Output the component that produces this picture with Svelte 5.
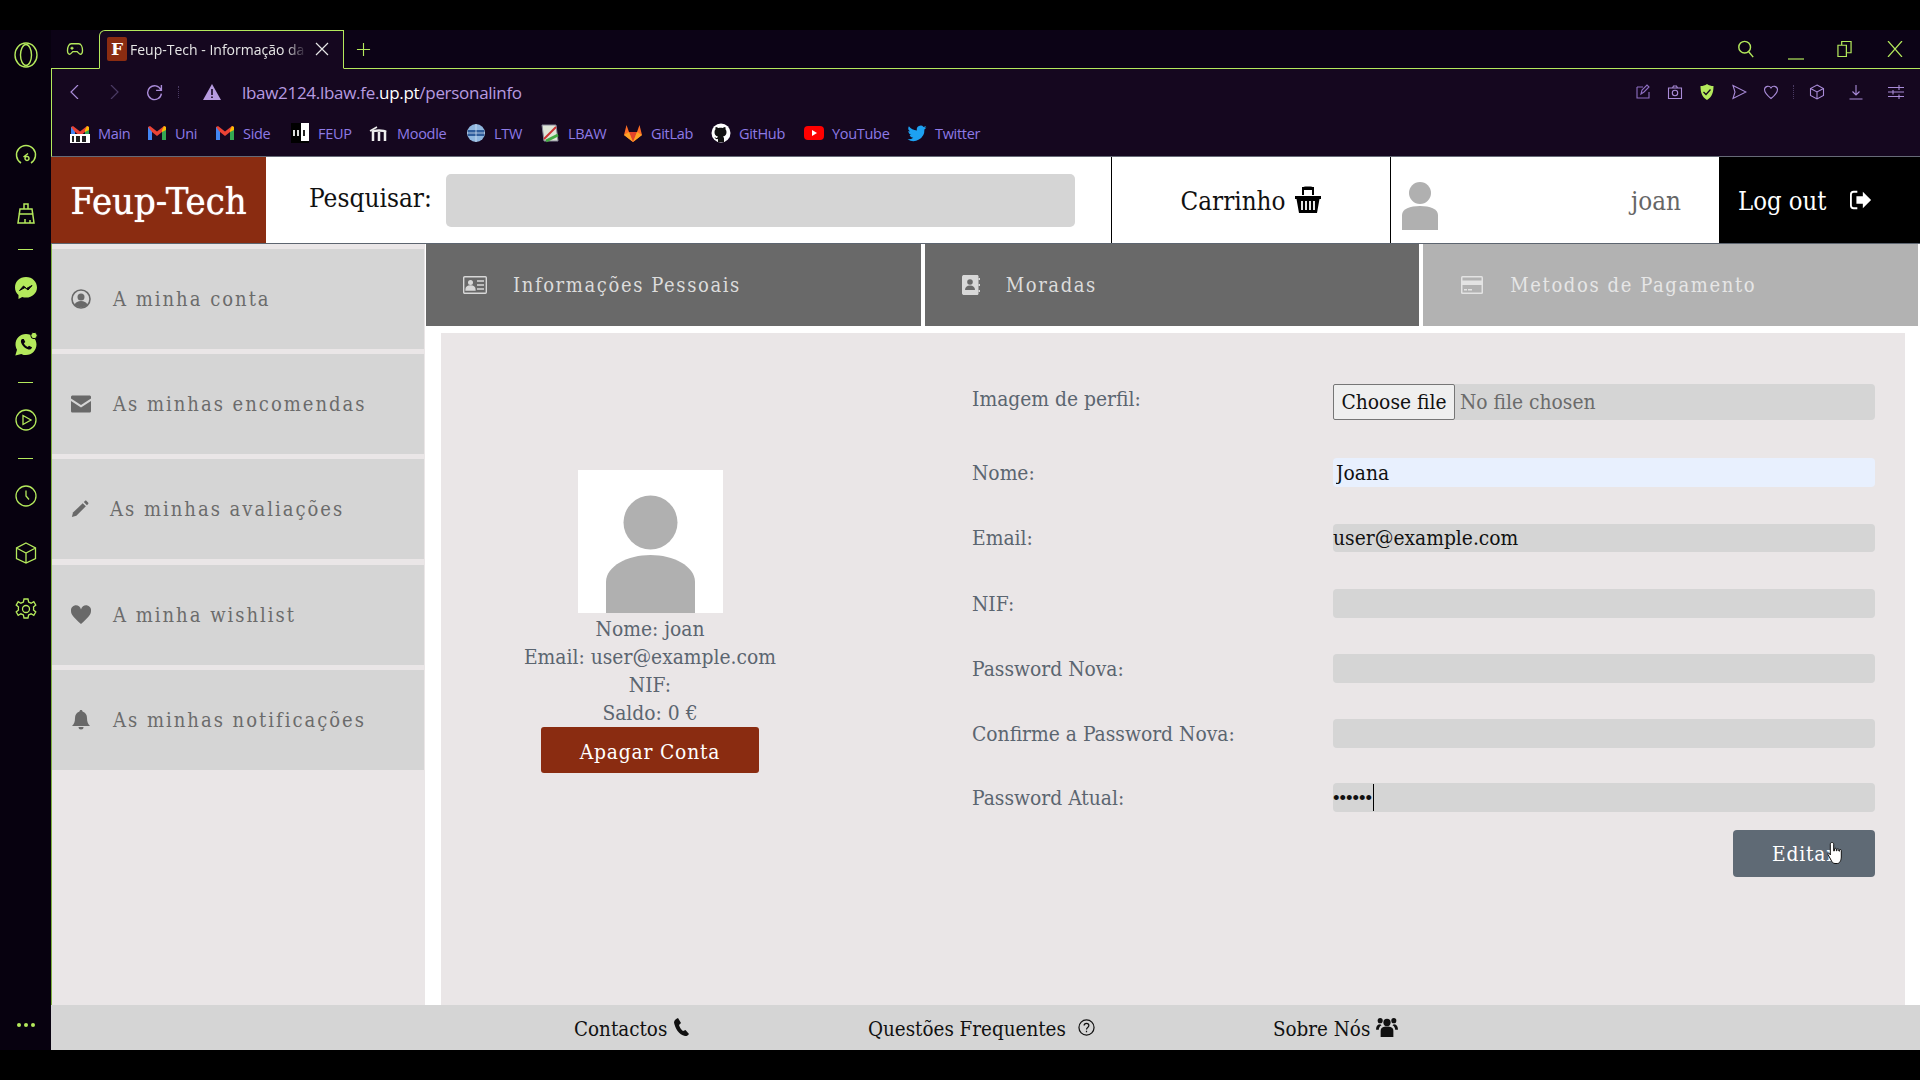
<script>
  // left rail of the browser: centre-to-centre spacing comes from the data
  const rail = [
    { id: 'speed', top: 74 }, { id: 'bag', top: 34 }, { id: 'dash', top: 12 },
    { id: 'msg', top: 15 }, { id: 'wa', top: 32 }, { id: 'dash', top: 14 },
    { id: 'play', top: 14 }, { id: 'dash', top: 14 }, { id: 'clock', top: 14 },
    { id: 'cube', top: 33 }, { id: 'gear', top: 32 }
  ];
  const bookmarks = [
    { id: 'gm100', label: 'Main', w: 77 }, { id: 'gm', label: 'Uni', w: 68 }, { id: 'gm', label: 'Side', w: 75 },
    { id: 'up', label: 'FEUP', w: 79 }, { id: 'moodle', label: 'Moodle', w: 97 }, { id: 'ltw', label: 'LTW', w: 74 },
    { id: 'lbaw', label: 'LBAW', w: 83 }, { id: 'gitlab', label: 'GitLab', w: 88 }, { id: 'github', label: 'GitHub', w: 93 },
    { id: 'yt', label: 'YouTube', w: 103 }, { id: 'tw', label: 'Twitter', w: 80 }
  ];
  const menu = [
    { id: 'user', label: 'A minha conta' }, { id: 'mail', label: 'As minhas encomendas' },
    { id: 'pen', label: 'As minhas avaliações' }, { id: 'heart', label: 'A minha wishlist' },
    { id: 'bell', label: 'As minhas notificações' }
  ];
</script>

{#snippet avatar(cls)}
  <svg class={cls} viewBox="0 0 145 143"><rect width="145" height="143" fill="#fff"/><ellipse cx="72.500" cy="52.500" rx="27" ry="27" fill="#b0b0b0"/><path d="M28 143V112C28 96 50 85 72.500 85S117 96 117 112V143Z" fill="#b0b0b0"/></svg>
{/snippet}

<div class="screen">
  <div class="browser">
    <aside class="rail">
      <svg class="opera" viewBox="0 0 24 28" fill="none" stroke="#b4e95c" stroke-width="1.400"><ellipse cx="12" cy="14" rx="11" ry="12"/><ellipse cx="12" cy="14" rx="5.500" ry="10.500"/></svg>
      {#each rail as r}
        <div class="rail-item" style="margin-top:{r.top}px">
          {#if r.id === 'dash'}<span class="dash"></span>
          {:else if r.id === 'speed'}<svg viewBox="0 0 24 24" fill="none" stroke="#b4e95c" stroke-width="1.500"><path d="M7 20A9.500 9.500 0 1 1 17 20"/><path d="M9.500 14L14 10.500M11 15.500a2 2 0 1 0 0-.1"/></svg>
          {:else if r.id === 'bag'}<svg viewBox="0 0 24 24" fill="none" stroke="#b4e95c" stroke-width="1.500"><path d="M10 3h4v5h-4zM6 8h12l2 14H4zM4.500 13h15M11 22v-4M16 22v-3"/></svg>
          {:else if r.id === 'msg'}<svg viewBox="0 0 24 24"><path d="M12 1C5.500 1 1 5.500 1 11.500c0 3.200 1.300 5.800 3.500 7.600V23l3.700-2c1.200.400 2.500.600 3.800.600 6.500 0 11-4.600 11-10.100S18.500 1 12 1Z" fill="#b4e95c"/><path d="M5.500 14.500l4-4.500 3 2.500 5.500-3-4 4.500-3-2.500Z" fill="#07010f" stroke="#07010f"/></svg>
          {:else if r.id === 'wa'}<svg viewBox="0 0 24 24"><path d="M12 2C6 2 1.500 6.500 1.500 12.300c0 2 .500 3.800 1.500 5.400L1.300 23.500l6-1.600c1.500.800 3.100 1.200 4.700 1.200 6 0 10.500-4.700 10.500-10.500S18 2 12 2Z" fill="#b4e95c"/><path d="M8 7c-1.500 1-1.500 3 0 5.500s4 4.500 6.500 5c2 .300 3.500-1 3.500-2.300l-3-1.500-1.300 1.300c-1.800-.800-3-2.100-3.800-3.800L11.300 10 9.800 7Z" fill="#07010f"/><circle cx="20" cy="3.500" r="3.200" fill="#b4e95c" stroke="#07010f"/></svg>
          {:else if r.id === 'play'}<svg viewBox="0 0 24 24" fill="none" stroke="#b4e95c" stroke-width="1.300"><circle cx="12" cy="12" r="10"/><path d="M9 7.500L17 12l-8 4.500Z"/></svg>
          {:else if r.id === 'clock'}<svg viewBox="0 0 24 24" fill="none" stroke="#b4e95c" stroke-width="1.300"><circle cx="12" cy="12" r="10"/><path d="M12 6.500V12l3 3.500"/></svg>
          {:else if r.id === 'cube'}<svg viewBox="0 0 24 24" fill="none" stroke="#b4e95c" stroke-width="1.300"><path d="M12 2l9.500 5v10.500L12 22l-9.500-4.500V7ZM2.500 7l9.500 5 9.500-5M12 12v10"/></svg>
          {:else if r.id === 'gear'}<svg viewBox="0 0 24 24" fill="none" stroke="#b4e95c" stroke-width="1.300"><circle cx="12" cy="12" r="3.500"/><path d="M10 2h4l.600 3 2.500 1.200 2.700-1.500 2 3.400-2.300 2c.200.900.200 1.800 0 2.800l2.300 2-2 3.400-2.700-1.500-2.500 1.200-.600 3h-4l-.600-3-2.500-1.200-2.700 1.500-2-3.400 2.300-2c-.200-1-.200-1.900 0-2.800l-2.300-2 2-3.400 2.700 1.500L9.400 5Z"/></svg>
          {/if}
        </div>
      {/each}
      <div class="dots"><i></i><i></i><i></i></div>
    </aside>

    <div class="window">
      <div class="tabbar">
        <svg class="game" viewBox="0 0 24 24" fill="none" stroke="#b4e95c" stroke-width="1.800"><path d="M7 5h10c3 0 5 4 5 9 0 3-1 5-3 5-1.500 0-2.500-2-4-3.500H9C7.500 17 6.500 19 5 19c-2 0-3-2-3-5 0-5 2-9 5-9Z"/><path d="M6 11h4M8 9v4M15.500 10h.1M17.500 12.500h.1"/></svg>
        <div class="tab">
          <span class="favicon">F</span>
          <span class="tab-title">Feup-Tech - Informação da</span>
          <svg class="tab-x" viewBox="0 0 14 14" stroke="#e6e6e6" stroke-width="1.200"><path d="M1 1l12 12M13 1L1 13"/></svg>
        </div>
        <svg class="plus" viewBox="0 0 16 16" stroke="#b4e95c" stroke-width="1.200"><path d="M8 1v14M1 8h14"/></svg>
        <div class="win-btns">
          <svg class="w-search" viewBox="0 0 20 20" fill="none" stroke="#b4e95c" stroke-width="1.600"><circle cx="8.500" cy="8" r="6.500"/><path d="M13 13l5 6"/></svg>
          <svg class="w-min" viewBox="0 0 16 16" stroke="#b4e95c" stroke-width="1.200"><path d="M0 15h16"/></svg>
          <svg class="w-max" viewBox="0 0 16 18" fill="none" stroke="#b4e95c" stroke-width="1.300"><path d="M1 5h9v12H1zM5 5V1h10v12h-5"/></svg>
          <svg class="w-close" viewBox="0 0 16 16" stroke="#b4e95c" stroke-width="1.200"><path d="M1 0l14 16M15 0L1 16"/></svg>
        </div>
      </div>

      <div class="urlbar">
        <svg class="nav" viewBox="0 0 14 14" fill="none" stroke="#a98bd8" stroke-width="1.200"><path d="M10 0L3 7l7 7"/></svg>
        <svg class="nav dim" viewBox="0 0 14 14" fill="none" stroke="#4a3a63" stroke-width="1.200"><path d="M4 0l7 7-7 7"/></svg>
        <svg class="nav reload" viewBox="0 0 16 16" fill="none" stroke="#a98bd8" stroke-width="1.300"><path d="M14 5.500A6.500 6.500 0 1 0 14.500 9M14.500 1v5h-5"/></svg>
        <span class="url-sep"></span>
        <svg class="warn" viewBox="0 0 18 16"><path d="M9 0l9 16H0Z" fill="#b79be0"/><path d="M9 5v6M9 12.500v1.500" stroke="#15071f" stroke-width="1.600"/></svg>
        <span class="url">lbaw2124.lbaw.fe.<b>up.pt</b>/personalinfo</span>
        <div class="tools">
          <svg viewBox="0 0 16 16" fill="none" stroke="#8f6fc4" stroke-width="1.100"><path d="M2 3h6M2 3v11h12V8M6 10l1-4 5-5 2 2-5 5Z"/></svg>
          <svg viewBox="0 0 16 16" fill="none" stroke="#a98bd8" stroke-width="1.100"><path d="M1.500 4h13v10.500h-13zM5.500 4l1-2h3l1 2"/><circle cx="8" cy="9" r="2.700"/></svg>
          <svg viewBox="0 0 16 16"><path d="M8 0c2 1.500 4 2 6.500 2 0 6.500-1.500 11-6.500 14C3 13 1.500 8.500 1.500 2 4 2 6 1.500 8 0Z" fill="#b4e95c"/><path d="M4.500 8l2.500 2.500 4.500-5" fill="none" stroke="#15071f" stroke-width="1.300"/></svg>
          <svg viewBox="0 0 16 16" fill="none" stroke="#a98bd8" stroke-width="1.100"><path d="M2 1.500L15 8 2 14.500 4 8Z"/></svg>
          <svg viewBox="0 0 16 16" fill="none" stroke="#a98bd8" stroke-width="1.100"><path d="M8 14.500C3 10.500 1.500 8 1.500 5.500A3.500 3.500 0 0 1 8 4a3.500 3.500 0 0 1 6.500 1.500C14.500 8 13 10.500 8 14.500Z"/></svg>
          <span class="tools-sep"></span>
          <svg viewBox="0 0 16 16" fill="none" stroke="#a98bd8" stroke-width="1.100"><path d="M8 1l6.500 3.500v7L8 15l-6.500-3.500v-7ZM1.500 4.500L8 8l6.500-3.500M8 8v7"/></svg>
          <svg viewBox="0 0 16 16" fill="none" stroke="#a98bd8" stroke-width="1.100"><path d="M8 1v10M4.500 7.500L8 11l3.500-3.500M1.500 15h13"/></svg>
          <svg viewBox="0 0 16 16" fill="none" stroke="#a98bd8" stroke-width="1.100"><path d="M0 3.500h16M0 8h16M0 12.500h16M11 1v5M5 6v4.500M11 10.500V15"/></svg>
        </div>
      </div>

      <div class="bookmarks">
        {#each bookmarks as b}
          <div class="bm" style="width:{b.w}px">
            {#if b.id === 'gm' || b.id === 'gm100'}
              <svg viewBox="0 0 20 20"><path d="M1 4v13h4V9l5 4 5-4v8h4V4l-2-1-7 5.500L3 3Z" fill="#ea4335"/><path d="M1 4v13h4V9Z" fill="#4285f4"/><path d="M19 4v13h-4V9Z" fill="#34a853"/><path d="M15 7l2-4 2 1v3l-4 2Z" fill="#fbbc04"/>{#if b.id === 'gm100'}<rect y="11" width="20" height="9" fill="#fff"/><rect x="2" y="13" width="2" height="6" fill="#222"/><rect x="6" y="13" width="4" height="6" fill="#222"/><rect x="12" y="13" width="4" height="6" fill="#222"/>{/if}</svg>
            {:else if b.id === 'up'}
              <svg viewBox="0 0 20 20"><rect x="1" width="18" height="20" fill="#000"/><rect x="11" width="8" height="18" fill="#fff"/><rect x="3" y="7" width="2" height="6" fill="#ddd"/><rect x="7" y="7" width="2" height="6" fill="#ddd"/><rect x="13" y="7" width="2" height="6" fill="#222"/></svg>
            {:else if b.id === 'moodle'}
              <svg viewBox="0 0 20 20" fill="none" stroke="#eee" stroke-width="2.500"><path d="M4 18V9M10 18V9M16 18V9M3 9c2-2 12-2 14 0"/><path d="M1 8L8 4" stroke-width="1.500"/></svg>
            {:else if b.id === 'ltw'}
              <svg viewBox="0 0 20 20"><circle cx="10" cy="10" r="9" fill="#8fb6de"/><rect x="2" y="7" width="16" height="6" fill="#2f5d9b"/><path d="M10 1v18M1 10h18" stroke="#cfe0f2" stroke-width=".8"/></svg>
            {:else if b.id === 'lbaw'}
              <svg viewBox="0 0 20 20"><path d="M2 2h14l2 16H4Z" fill="#dfe6d8" stroke="#889"/><path d="M4 16L16 4" stroke="#c33" stroke-width="2"/><path d="M6 18l12-6" stroke="#4a4" stroke-width="3"/></svg>
            {:else if b.id === 'gitlab'}
              <svg viewBox="0 0 20 20"><path d="M10 19L1 12 3.500 2 6 9h8l2.500-7L19 12Z" fill="#fc6d26"/><path d="M10 19L6 9h8Z" fill="#e24329"/><path d="M1 12l5-3 4 10ZM19 12l-5-3-4 10Z" fill="#fca326"/></svg>
            {:else if b.id === 'github'}
              <svg viewBox="0 0 20 20"><circle cx="10" cy="10" r="9.500" fill="#fff"/><path d="M7 19v-3c-2 .500-3-.500-3.500-2 1 .500 1.500 1 2.500 1 .300-.700.700-1 1-1.500-2.500-.500-3.500-2-3.500-4.500 0-1 .300-2 1-2.700-.200-.800-.100-1.700.200-2.300 1 0 1.800.500 2.500 1 1.700-.400 3-.400 4.600 0 .700-.500 1.500-1 2.500-1 .300.600.400 1.500.200 2.300.700.700 1 1.700 1 2.700 0 2.500-1 4-3.500 4.500.600.500 1 1.200 1 2.300V19Z" fill="#111"/></svg>
            {:else if b.id === 'yt'}
              <svg viewBox="0 0 20 20"><rect y="3" width="20" height="14" rx="4" fill="#f00"/><path d="M8 7l5 3-5 3Z" fill="#fff"/></svg>
            {:else if b.id === 'tw'}
              <svg viewBox="0 0 20 20"><path d="M19.500 4.500c-.700.300-1.400.500-2.200.600.800-.500 1.400-1.200 1.700-2.100-.700.400-1.600.700-2.400.900a3.900 3.900 0 0 0-6.700 3.500C6.600 7.200 3.800 5.700 1.900 3.300a3.900 3.900 0 0 0 1.200 5.200c-.600 0-1.200-.200-1.800-.500 0 1.900 1.400 3.500 3.100 3.900-.600.200-1.200.200-1.800.100.500 1.500 1.900 2.700 3.700 2.700A7.900 7.900 0 0 1 .500 16.300 11 11 0 0 0 17.400 6.500c.800-.500 1.500-1.200 2.100-2Z" fill="#1da1f2"/></svg>
            {/if}
            <span>{b.label}</span>
          </div>
        {/each}
      </div>

      <div class="page">
        <header>
          <div class="logo"><span>Feup-Tech</span></div>
          <div class="search">
            <label for="q">Pesquisar:</label>
            <input id="q" type="text" />
          </div>
          <div class="cart">
            Carrinho
            <svg viewBox="0 0 28 28"><path d="M9 9V4c0-1.500 1-2.500 2.500-2.500h5C18 1.500 19 2.500 19 4v5" fill="none" stroke="#000" stroke-width="2"/><rect x="8" y="1" width="12" height="3" fill="#000"/><path d="M1 10h26v3H25.500L23 27H5L2.500 13H1Z" fill="#000"/><path d="M8 15v9M12 15v9M16 15v9M20 15v9" stroke="#fff" stroke-width="1.800"/></svg>
          </div>
          <div class="me">
            <svg viewBox="0 0 36 48"><ellipse cx="18" cy="11" rx="11" ry="11" fill="#b0b0b0"/><path d="M0 48V33C0 27 8 24 18 24S36 27 36 33V48Z" fill="#b0b0b0"/></svg>
            <span>joan</span>
          </div>
          <div class="logout">
            Log out
            <svg viewBox="0 0 24 20"><path d="M8 1H4C2 1 1 2.500 1 4v12c0 1.500 1 3 3 3h4" fill="none" stroke="#fff" stroke-width="2"/><path d="M7 6h7V1l9 9-9 9v-5H7Z" fill="#fff"/></svg>
          </div>
        </header>

        <div class="body">
          <nav class="side">
            {#each menu as m}
              <div class="side-item" class:pen={m.id === 'pen'}>
                {#if m.id === 'user'}
                  <svg viewBox="0 0 20 20"><circle cx="10" cy="10" r="9" fill="none" stroke="#696969" stroke-width="1.600"/><circle cx="10" cy="8" r="3.500" fill="#696969"/><path d="M3.500 16c1-3 3.500-4 6.500-4s5.500 1 6.500 4c-3 3-10 3-13 0Z" fill="#696969"/></svg>
                {:else if m.id === 'mail'}
                  <svg viewBox="0 0 20 20"><path d="M0 3c0-1 .800-1.500 1.500-1.500h17c.700 0 1.500.500 1.500 1.500v1.500L10 11 0 4.500Z" fill="#696969"/><path d="M0 7l10 6.500L20 7v10c0 1-.800 1.500-1.500 1.500h-17C.800 18.500 0 18 0 17Z" fill="#696969"/></svg>
                {:else if m.id === 'pen'}
                  <svg viewBox="0 0 20 20"><path d="M1 19l1.200-5L13 3.500l3.500 3.500L6 17.500Z" fill="#696969"/><path d="M14.200 2.300l1.300-1.300c.500-.500 1.300-.500 1.800 0l1.700 1.700c.500.500.500 1.300 0 1.800l-1.300 1.300Z" fill="#696969"/></svg>
                {:else if m.id === 'heart'}
                  <svg viewBox="0 0 20 20"><path d="M10 19C3.500 13 0 10 0 6a5 5 0 0 1 10-1.500A5 5 0 0 1 20 6c0 4-3.500 7-10 13Z" fill="#696969"/></svg>
                {:else}
                  <svg viewBox="0 0 20 20"><path d="M10 0c1 0 1.500.700 1.500 1.500C14.500 2.300 16 5 16 8c0 4 1 6 3 8H1c2-2 3-4 3-8 0-3 1.500-5.700 4.500-6.500C8.500.700 9 0 10 0Z" fill="#696969"/><path d="M7.500 17h5a2.500 2.500 0 0 1-5 0Z" fill="#696969"/></svg>
                {/if}
                <span>{m.label}</span>
              </div>
            {/each}
          </nav>

          <main>
            <div class="tabs">
              <div class="ptab">
                <svg viewBox="0 0 24 18"><rect x=".700" y=".700" width="22.600" height="16.600" rx="1" fill="none" stroke="#d8d8d8" stroke-width="1.400"/><circle cx="7.500" cy="6.500" r="2.500" fill="#d8d8d8"/><path d="M3 14c0-3 2-4 4.500-4S12 11 12 14ZM14 5h7M14 9h7M14 13h7" fill="#d8d8d8" stroke="#d8d8d8" stroke-width="1.300"/></svg>
                <span>Informações Pessoais</span>
              </div>
              <div class="ptab">
                <svg class="book" viewBox="0 0 18 20"><path d="M2 0h13c1 0 1.500.700 1.500 1.500v17c0 .800-.500 1.500-1.500 1.500H2c-1 0-2-.700-2-1.500v-17C0 .700 1 0 2 0Z" fill="#d8d8d8"/><circle cx="8" cy="7" r="2.800" fill="#696969"/><path d="M3 15c0-3 2-4.500 5-4.500s5 1.500 5 4.500Z" fill="#696969"/><path d="M16.500 3h1.500v2h-1.500zM16.500 9h1.500v2h-1.500zM16.500 15h1.500v2h-1.500z" fill="#d8d8d8"/></svg>
                <span>Moradas</span>
              </div>
              <div class="ptab off">
                <svg viewBox="0 0 22 18"><rect width="22" height="18" rx="1.500" fill="#e3e3e3"/><rect x="1.500" y="1.500" width="19" height="3" fill="#b2b2b2"/><rect x="0" y="5" width="22" height="1" fill="#e3e3e3"/><rect x="1.500" y="9" width="19" height="7.500" fill="#b2b2b2"/><rect x="3" y="13" width="3" height="1.500" fill="#e3e3e3"/><rect x="7" y="13" width="4" height="1.500" fill="#e3e3e3"/></svg>
                <span>Metodos de Pagamento</span>
              </div>
            </div>

            <section class="panel">
              <div class="profile">
                {@render avatar('photo')}
                <p>Nome: joan</p>
                <p>Email: user@example.com</p>
                <p>NIF:</p>
                <p>Saldo: 0 €</p>
                <button class="del">Apagar Conta</button>
              </div>

              <form class="form" onsubmit={(e) => e.preventDefault()}>
                <div class="row first"><label for="f0">Imagem de perfil:</label>
                  <div class="filebox"><button id="f0" type="button" class="pick">Choose file</button><span>No file chosen</span></div>
                </div>
                <div class="row r-nome"><label for="f1">Nome:</label><input id="f1" class="auto" type="text" value="Joana" /></div>
                <div class="row r-email"><label for="f2">Email:</label><input id="f2" type="text" value="user@example.com" /></div>
                <div class="row r-nif"><label for="f3">NIF:</label><input id="f3" type="text" /></div>
                <div class="row"><label for="f4">Password Nova:</label><input id="f4" type="text" /></div>
                <div class="row"><label for="f5">Confirme a Password Nova:</label><input id="f5" type="text" /></div>
                <div class="row r-atual"><label for="f6">Password Atual:</label>
                  <div class="pw"><input id="f6" type="password" value="123456" /><span class="caret"></span></div>
                </div>
                <div class="actions">
                  <button class="edit">Editar
                    <svg class="hand" viewBox="0 0 18 24"><path d="M5 1.500c1 0 1.700.700 1.700 1.700V10l.800-.200V8c0-1 1.800-1 1.800 0v1.700l.700.100V8.500c0-1 1.800-1 1.800 0v1.500l.700.200V9.300c0-1 1.800-1 1.800 0V16c0 3-1.500 6.500-4 6.500H8c-2 0-3-1.500-4-3.500L1 13.500c-.500-1 .800-2 1.700-1.200L3.300 14V3.200C3.300 2.200 4 1.500 5 1.500Z" fill="#fff" stroke="#111" stroke-width="1"/></svg>
                  </button>
                </div>
              </form>
            </section>
          </main>
        </div>

        <footer>
          <span class="f-a">Contactos
            <svg viewBox="0 0 16 18"><path d="M4 0l3 5-2 2c.500 2 2 4.500 4 6l2.500-1 3.500 4c-1 1.500-2.500 2.500-4 2C5 17 1 10 0 4.500 0 2.500 2 .500 4 0Z" fill="#111"/></svg>
          </span>
          <span class="f-b">Questões Frequentes
            <svg viewBox="0 0 18 18" fill="none" stroke="#111" stroke-width="1.300"><circle cx="9" cy="9" r="8"/><path d="M6.500 7C6.500 4 11.500 4 11.500 7c0 2-2.500 2-2.500 4M9 12.500v1.500"/></svg>
          </span>
          <span class="f-c">Sobre Nós
            <svg viewBox="0 0 24 22"><circle cx="12" cy="6" r="4" fill="#111"/><circle cx="4.500" cy="4" r="2.800" fill="#111"/><circle cx="19.500" cy="4" r="2.800" fill="#111"/><path d="M5 22V15c0-3 3-4.500 7-4.500s7 1.500 7 4.500v7Z" fill="#111"/><path d="M0 13c0-3 2-5 4.500-5L6 9c-2 1-3 3-3 5H0ZM24 13c0-3-2-5-4.500-5L18 9c2 1 3 3 3 5h3Z" fill="#111"/></svg>
          </span>
        </footer>
      </div>
    </div>
  </div>
</div>

<style>
  :global(body) { margin: 0; background: #000; }
  .screen {
    width: 1920px; height: 1080px; overflow: hidden; background: #000;
    padding: 30px 0; box-sizing: border-box;
    font-family: "DejaVu Serif Condensed", "DejaVu Serif", serif;
  }
  .browser { display: flex; height: 1020px; background: #07010f; }

  .rail { width: 51px; flex: none; display: flex; flex-direction: column; align-items: center; padding-top: 11px; box-sizing: border-box; position: relative; }
  .opera { width: 24px; height: 28px; flex: none; }
  .rail-item { width: 24px; height: 24px; flex: none; display: flex; align-items: center; justify-content: center; }
  .rail-item svg { width: 24px; height: 24px; }
  .dash { width: 15px; height: 1px; background: #b4e95c; }
  .dots { position: absolute; bottom: 23px; display: flex; gap: 3px; }
  .dots i { width: 4px; height: 4px; border-radius: 50%; background: #b4e95c; }

  .window { flex: 1; min-width: 0; display: flex; flex-direction: column; }
  .tabbar { height: 39px; flex: none; display: flex; align-items: center; position: relative; background: #0c0316; border-bottom: 1px solid #b4e95c; box-sizing: border-box; }
  .game { width: 18px; height: 18px; margin-left: 15px; }
  .tab { width: 245px; height: 39px; margin-left: 15px; box-sizing: border-box; display: flex; align-items: center; background: #15071f; border: 1px solid #b4e95c; border-bottom-color: #15071f; border-top-left-radius: 6px; padding-left: 7px; position: relative; top: 0; }
  .favicon { width: 20px; height: 24px; flex: none; background: #8a2c11; color: #fff; border-radius: 2px; font: bold 17px "DejaVu Serif", serif; text-align: center; line-height: 24px; }
  .tab-title { font: 14px "Open Sans", sans-serif; color: #e6e6e6; margin-left: 3px; width: 177px; white-space: nowrap; overflow: hidden; -webkit-mask-image: linear-gradient(90deg, #000 88%, transparent); mask-image: linear-gradient(90deg, #000 88%, transparent); }
  .tab-x { width: 14px; height: 14px; margin-left: 8px; }
  .plus { width: 15px; height: 15px; margin-left: 12px; }
  .win-btns { margin-left: auto; display: flex; align-items: center; height: 100%; padding-right: 17px; }
  .win-btns svg { display: block; }
  .w-search { width: 18px; height: 20px; margin-right: 33px; }
  .w-min { width: 16px; height: 16px; margin-right: 33px; margin-top: 6px; }
  .w-max { width: 15px; height: 18px; margin-right: 35px; }
  .w-close { width: 16px; height: 16px; }

  .urlbar { height: 46px; flex: none; background: #15071f; display: flex; align-items: center; padding-left: 16px; box-sizing: border-box; border-left: 1px solid #b4e95c; }
  .nav { width: 14px; height: 14px; margin-right: 25px; flex: none; }
  .nav.reload { width: 17px; height: 17px; margin-right: 15px; }
  .url-sep { width: 1px; height: 12px; border-left: 1px dotted #4a3a63; margin-right: 23px; }
  .warn { width: 18px; height: 16px; margin-right: 21px; }
  .url { font: 17px "Open Sans", sans-serif; color: #b79be0; letter-spacing: -.3px; }
  .url b { color: #fff; font-weight: 400; }
  .tools { margin-left: auto; display: flex; align-items: center; gap: 16px; padding-right: 16px; }
  .tools svg { width: 16px; height: 16px; }
  .tools svg:nth-last-child(2) { margin-left: 7px; }
  .tools svg:last-child { margin-left: 8px; }
  .tools-sep { width: 1px; height: 14px; border-left: 1px dotted #4a3a63; margin: 0 -2px; }

  .bookmarks { height: 42px; flex: none; background: #15071f; display: flex; align-items: center; padding: 0 0 5px 18px; border-left: 1px solid #b4e95c; border-bottom: 1px solid #666a77; box-sizing: border-box; }
  .bm { display: flex; align-items: center; gap: 8px; flex: none; }
  .bm svg { width: 20px; height: 20px; flex: none; }
  .bm span { font: 14.500px "Open Sans", sans-serif; color: #8e7ae6; letter-spacing: -.3px; white-space: nowrap; }

  .page { flex: 1; min-height: 0; background: #fff; display: flex; flex-direction: column; }
  header { height: 87px; flex: none; display: flex; align-items: stretch; border-bottom: 1px solid #5d6570; box-sizing: border-box; }
  .logo { width: 215px; flex: none; background: #8a2c11; color: #fff; font-size: 37.800px; display: flex; align-items: center; justify-content: center; text-shadow: 0 0 1px #fff; }
  .logo span { margin-top: 2px; }
  .search { width: 845px; flex: none; display: flex; align-items: center; padding-left: 43px; box-sizing: border-box; }
  .search label { width: 122px; flex: none; font-size: 26px; color: #111; margin-top: -5px; white-space: nowrap; }
  .search input { width: 629px; height: 53px; margin-left: 15px; border: 0; border-radius: 5px; background: #d5d5d5; padding: 0; box-sizing: border-box; flex: none; }
  .cart { width: 279px; flex: none; border-left: 1px solid #000; box-sizing: border-box; display: flex; align-items: center; justify-content: center; gap: 8px; font-size: 25.800px; color: #111; padding-top: 2px; }
  .cart svg { width: 28px; height: 28px; margin-top: -2px; }
  .me { width: 329px; flex: none; border-left: 1px solid #000; box-sizing: border-box; display: flex; align-items: center; justify-content: space-between; padding: 2px 38px 0 11px; font-size: 25.800px; color: #666; }
  .me svg { width: 36px; height: 48px; margin-top: 9px; }
  .logout { flex: 1; background: #000; color: #fff; font-size: 25.400px; display: flex; align-items: center; padding: 2px 0 0 19px; gap: 24px; }
  .logout svg { width: 22px; height: 20px; margin-top: -3px; }

  .body { flex: 1; min-height: 0; display: flex; }
  .side { width: 374px; flex: none; background: #eae6e7; padding-top: 5px; margin-right: 1px; box-sizing: border-box; display: flex; flex-direction: column; gap: 5.200px; border-left: 1px solid #7fb040; }
  .side-item { height: 100px; flex: none; width: 372px; background: #d5d5d5; display: flex; align-items: center; padding-left: 19px; box-sizing: border-box; color: #6b6b6b; font-size: 20px; letter-spacing: 2px; gap: 22px; }
  .side-item svg { width: 20px; height: 20px; flex: none; }
  .side-item.pen { gap: 21px; }
  .side-item.pen svg { width: 18px; height: 18px; }

  main { flex: 1; min-width: 0; display: flex; flex-direction: column; }
  .tabs { height: 82px; flex: none; display: flex; gap: 4px; padding-right: 2px; }
  .ptab { flex: 1; background: #696969; color: #dcdcdc; display: flex; align-items: center; padding-left: 37px; box-sizing: border-box; gap: 26px; font-size: 20px; letter-spacing: 1.600px; }
  .ptab svg { width: 24px; height: 18px; flex: none; }
  .ptab svg.book { width: 18px; height: 20px; }
  .ptab.off { background: #b2b2b2; color: #e6e6e6; }
  .panel { flex: 1; min-height: 0; margin: 7px 15px 0 15px; background: #eae6e7; display: flex; }

  .profile { width: 418px; flex: none; display: flex; flex-direction: column; align-items: center; padding-top: 137px; box-sizing: border-box; color: #5b6570; font-size: 20.800px; }
  .photo { width: 145px; height: 143px; display: block; flex: none; }
  .profile p { margin: 0; height: 28px; line-height: 28px; white-space: nowrap; }
  .profile .photo + p { margin-top: 2px; }
  .del { width: 218px; height: 46px; margin-top: 0; background: #8a2c11; color: #fff; border: 0; border-radius: 3px; font: inherit; letter-spacing: .8px; padding: 3px 0 0; }

  .form { flex: 1; min-width: 0; padding: 51px 30px 0 113px; color: #5b6570; font-size: 20.800px; }
  .row { display: flex; align-items: center; height: 29px; margin-top: 36px; }
  .row.first { height: 36px; margin-top: 0; }
  .row.first label { margin-top: -7px; }
  .row.r-nome { margin-top: 38px; }
  .row.r-email { height: 28px; margin-top: 37px; }
  .row.r-nif { margin-top: 37px; }
  .row.r-atual { margin-top: 35px; }
  .row label { width: 361px; flex: none; white-space: nowrap; }
  .row input { width: 542px; height: 100%; flex: none; box-sizing: border-box; background: #d5d5d5; border: 0; border-radius: 4px; padding: 0; font: inherit; color: #111; outline: 0; }
  .row input.auto { background: #e8f0fe; padding-left: 3px; }
  .filebox { width: 542px; height: 36px; flex: none; display: flex; align-items: center; background: #d5d5d5; border-radius: 4px; color: #6b6b6b; gap: 5px; }
  .pick { width: 122px; height: 36px; flex: none; font: inherit; color: #111; background: #efefef; border: 1px solid #767676; border-radius: 2px; padding: 0; }
  .pw { position: relative; width: 542px; height: 100%; flex: none; }
  .pw input { width: 100%; font: 18.500px "Liberation Sans", sans-serif; }
  .caret { position: absolute; left: 40px; top: 1px; bottom: 1px; width: 1px; background: #000; }
  .actions { display: flex; justify-content: flex-end; margin-top: 18px; }
  .edit { position: relative; width: 142px; height: 47px; background: #5f6a75; color: #fff; border: 0; border-radius: 4px; font: inherit; letter-spacing: .8px; padding: 1px 0 0; }
  .hand { position: absolute; left: 94px; top: 11px; width: 18px; height: 24px; }

  footer { height: 45px; flex: none; background: #d5d5d5; display: flex; align-items: center; color: #111; font-size: 20.400px; white-space: nowrap; padding-top: 2px; box-sizing: border-box; }
  footer span { display: flex; align-items: center; flex: none; }
  .f-a { margin-left: 523px; width: 294px; gap: 7px; }
  .f-b { width: 405px; gap: 12px; }
  .f-c { gap: 6px; }
  .f-a svg { width: 16px; height: 18px; margin-top: -3px; }
  .f-b svg { width: 17px; height: 17px; margin-top: -3px; }
  .f-c svg { width: 22px; height: 20px; margin-top: -3px; }
</style>
